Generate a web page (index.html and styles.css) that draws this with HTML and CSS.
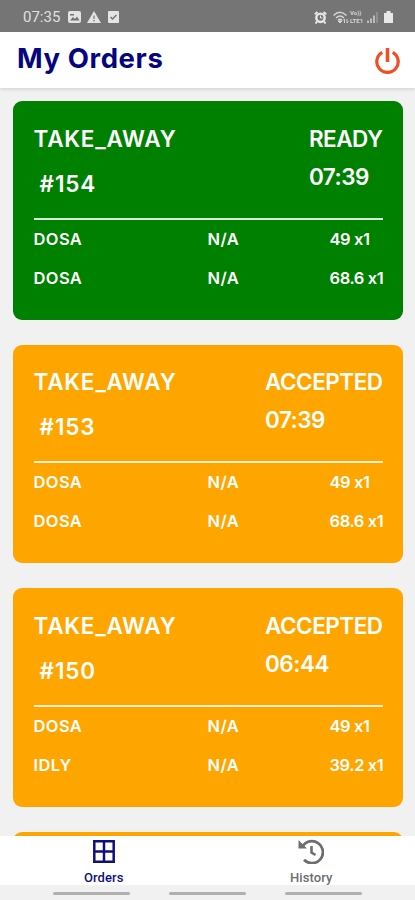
FILE: index.html
```html
<!DOCTYPE html>
<html lang="en">
<head>
  <meta charset="UTF-8">
  <meta name="viewport" content="width=device-width, initial-scale=1.0">
  <title>My Orders</title>
  <link rel="stylesheet" href="styles.css">
</head>
<body>
  <div class="status-bar">
    <span class="clock">07:35</span>
    <svg class="image-icon" width="13" height="12" viewBox="0 0 13 12"><rect width="13" height="12" rx="2" fill="#e4e4e4"/><path d="M2 9.5l3-3.5 2 2 2-2.5 2.500 4z" fill="#757575"/><path d="M2 3h4v1.500H2z" fill="#757575"/></svg>
    <svg class="alert-icon" width="14" height="12" viewBox="0 0 14 12"><path d="M7 0l7 12H0z" fill="#e4e4e4"/><path d="M7 4.500v3.500M7 9v1.500" stroke="#757575" stroke-width="1.200"/></svg>
    <svg class="check-icon" width="11" height="12" viewBox="0 0 11 12"><rect width="11" height="12" rx="1" fill="#e4e4e4"/><path d="M2.500 6l2 2 4-4" fill="none" stroke="#757575" stroke-width="1.500"/></svg>
    <div class="signals">
      <svg width="13" height="13" viewBox="0 0 13 13"><circle cx="6.500" cy="6.800" r="4.200" fill="none" stroke="#e8e8e8" stroke-width="2.400"/><path d="M.8 3.200L3.500 1M12.200 3.200L9.500 1M3 10.500l-1.500 2M10 10.500l1.500 2" stroke="#e8e8e8" stroke-width="2"/><path d="M6.500 4.500V7H8.500" fill="none" stroke="#e8e8e8"/></svg>
      <svg class="wifi-icon" width="16" height="13" viewBox="0 0 16 13"><path d="M.5 4.500Q7 -2 13.500 4.500M3 7q4-4 8 0M5 9.300q2-1.800 4 0" fill="none" stroke="#d4d4d4" stroke-width="1.500"/><path d="M7 12l-2-2h4zM11.500 12V8M10 9.500L11.500 8M14 8v4M14 12l1.500-1.500" fill="#d4d4d4" stroke="#d4d4d4"/></svg>
      <div class="lte"><div>Vo))</div><div>LTE1</div></div>
      <svg width="12" height="12" viewBox="0 0 12 12"><path d="M1 12V9.500M4 12V7.500M7 12V4.500" stroke="#d4d4d4" stroke-width="1.500"/><path d="M10 12V1" stroke="#999" stroke-width="1.500"/></svg>
      <svg class="battery" width="9" height="12" viewBox="0 0 9 12"><path d="M0 2h2.500V0h4v2H9v10H0z" fill="#e8e8e8"/></svg>
    </div>
  </div>

  <header class="header">
    <h1>My Orders</h1>
    <svg class="power" width="25" height="26" viewBox="0 0 25 26"><path d="M7.300 4.400a10.700 10.700 0 1 0 10.400 0" fill="none" stroke="#f04e23" stroke-width="3.200"/><path d="M12.500 0v14" stroke="#f04e23" stroke-width="3.600"/></svg>
  </header>

  <main class="orders">
    <section class="card ready">
      <div class="card-top">
        <div>
          <div class="type">TAKE_AWAY</div>
          <div class="number">#154</div>
        </div>
        <div>
          <div class="state">READY</div>
          <div class="time">07:39</div>
        </div>
      </div>
      <div class="item"><span>DOSA</span><span>N/A</span><span class="price">49 x1</span></div>
      <div class="item"><span>DOSA</span><span>N/A</span><span class="price">68.6 x1</span></div>
    </section>

    <section class="card accepted">
      <div class="card-top">
        <div>
          <div class="type">TAKE_AWAY</div>
          <div class="number">#153</div>
        </div>
        <div>
          <div class="state">ACCEPTED</div>
          <div class="time">07:39</div>
        </div>
      </div>
      <div class="item"><span>DOSA</span><span>N/A</span><span class="price">49 x1</span></div>
      <div class="item"><span>DOSA</span><span>N/A</span><span class="price">68.6 x1</span></div>
    </section>

    <section class="card accepted">
      <div class="card-top">
        <div>
          <div class="type">TAKE_AWAY</div>
          <div class="number">#150</div>
        </div>
        <div>
          <div class="state">ACCEPTED</div>
          <div class="time">06:44</div>
        </div>
      </div>
      <div class="item"><span>DOSA</span><span>N/A</span><span class="price">49 x1</span></div>
      <div class="item"><span>IDLY</span><span>N/A</span><span class="price">39.2 x1</span></div>
    </section>

    <!-- Next order, cut off by the tab bar -->
    <section class="card accepted"></section>
  </main>

  <nav class="tabs">
    <div class="tab active">
      <svg width="22" height="23" viewBox="0 0 22 23"><path d="M1.300 1.300h19.400v20.400H1.300zM11 1v21M1 11.500h20" fill="none" stroke="#10107c" stroke-width="2.500"/></svg>
      <span>Orders</span>
    </div>
    <div class="tab history">
      <svg width="26" height="25" viewBox="0 0 26 25"><path d="M4.500 7.500A11 11 0 1 1 6 20.800" fill="none" stroke="#6e6e6e" stroke-width="2.800"/><path d="M.5 1v8.500H9z" fill="#6e6e6e"/><path d="M13.500 7v6.500l4 2.500" fill="none" stroke="#6e6e6e" stroke-width="2.600"/></svg>
      <span>History</span>
    </div>
  </nav>
  <div class="gestures"><i></i><i></i><i></i></div>
</body>
</html>
```
FILE: styles.css
```css
* {
  box-sizing: border-box;
}
body {
  margin: 0;
  height: 900px;
  display: flex;
  flex-direction: column;
  overflow: hidden;
  background-color: #f1f1f1;
  font-family: Inter, "Liberation Sans", sans-serif;
}
svg {
  display: block;
  flex: none;
}
.status-bar {
  flex: none;
  display: flex;
  align-items: center;
  height: 32px;
  padding: 2px 22px 0 23px;
  background-color: #757575;
  color: #e0e0e0;
}
.clock {
  width: 45px;
  font: 15px/20px Roboto, sans-serif;
}
.alert-icon {
  margin-left: 6px;
}
.check-icon {
  margin-left: 7px;
}
.signals {
  display: flex;
  align-items: center;
  margin-left: auto;
}
.wifi-icon {
  margin-left: 6px;
}
.lte {
  width: 17px;
  margin-left: 1px;
  font: bold 6px/8px Roboto, sans-serif;
  color: #d4d4d4;
}
.battery {
  margin-left: 5px;
}
.header {
  flex: none;
  display: flex;
  align-items: center;
  justify-content: space-between;
  height: 56px;
  padding: 0 15.5px 0 17px;
  background-color: #fff;
  box-shadow: 0 2px 3px rgba(0, 0, 0, 0.1);
}
.header h1 {
  margin: 0 0 4px;
  font-size: 27.5px;
  line-height: 36px;
  font-weight: 700;
  letter-spacing: 0.6px;
  color: #060680;
}
.power {
  margin-top: 1px;
}
.orders {
  flex: 1;
  min-height: 0;
  overflow: hidden;
  padding: 13px 12px 0 13px;
}
.card {
  height: 218.5px;
  margin-bottom: 25px;
  padding: 20.5px 20.5px 0;
  border-radius: 9px;
  color: #fff;
  font-weight: 600;
  font-feature-settings: "calt" 0;
}
.ready {
  background-color: #008000;
}
.accepted {
  background-color: #ffa500;
}
.card-top {
  display: flex;
  justify-content: space-between;
  height: 98px;
  border-bottom: 2px solid rgba(255, 255, 255, 0.85);
  font-size: 22.5px;
  line-height: 34px;
}
.type {
  letter-spacing: 0.75px;
}
.number {
  margin-top: 11px;
  padding-left: 6px;
  letter-spacing: 0.9px;
}
.state {
  letter-spacing: -0.5px;
}
.time {
  margin-top: 4px;
  letter-spacing: -0.5px;
}
.item {
  display: grid;
  grid-template-columns: 174px 122px 1fr;
  margin-bottom: 7px;
  padding-top: 6px;
  font-size: 16.5px;
  line-height: 26px;
  letter-spacing: 0.4px;
  white-space: nowrap;
}
.price {
  letter-spacing: -0.4px;
}
.tabs {
  flex: none;
  display: flex;
  height: 49px;
  background-color: #fff;
}
.tab {
  flex: 1;
  display: flex;
  flex-direction: column;
  align-items: center;
  padding-top: 4px;
  font: 500 13px/16px Roboto, sans-serif;
  letter-spacing: 0.1px;
  color: #6e6e6e;
}
.tab span {
  margin-top: 7px;
}
.history {
  padding-top: 3px;
}
.history span {
  margin-top: 6px;
}
.active {
  color: #10107c;
}
.gestures {
  flex: none;
  display: flex;
  justify-content: center;
  gap: 39px;
  height: 15px;
  padding-top: 6.5px;
}
.gestures i {
  width: 77px;
  height: 3.5px;
  border-radius: 2px;
  background-color: #b0b0b0;
}
```
